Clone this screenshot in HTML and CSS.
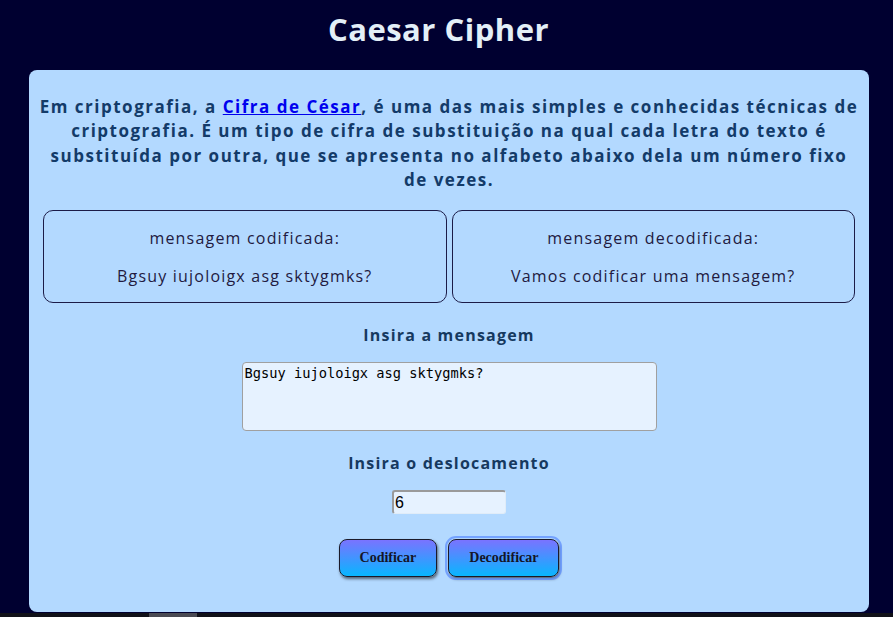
FILE: index.html
```html
<!DOCTYPE html>
<html lang="pt">
<head>
<meta charset="utf-8">
<title>Caesar Cipher</title>
<link rel="stylesheet" href="styles.css">
</head>
<body>
<h1 class="title">Caesar Cipher</h1>
<main class="card">
  <p class="intro">Em criptografia, a <a href="#" class="link">Cifra de César</a>, é uma das mais simples e conhecidas técnicas de criptografia. É um tipo de cifra de substituição na qual cada letra do texto é substituída por outra, que se apresenta no alfabeto abaixo dela um número fixo de vezes.</p>
  <div class="results">
    <div class="result">
      <p class="result-label">mensagem codificada:</p>
      <p class="result-text">Bgsuy iujoloigx asg sktygmks?</p>
    </div>
    <div class="result">
      <p class="result-label">mensagem decodificada:</p>
      <p class="result-text">Vamos codificar uma mensagem?</p>
    </div>
  </div>
  <label class="field-label" for="msg">Insira a mensagem</label>
  <textarea id="msg" class="message" spellcheck="false">Bgsuy iujoloigx asg sktygmks?</textarea>
  <label class="field-label second" for="shift">Insira o deslocamento</label>
  <input id="shift" class="shift" type="text" value="6">
  <div class="actions">
    <button class="btn">Codificar</button>
    <button class="btn focused">Decodificar</button>
  </div>
</main>
<div class="scrollbar"><div class="thumb"></div></div>
</body>
</html>
```

FILE: styles.css
```css
html, body {
  margin: 0;
  padding: 0;
  background: #000030;
  height: 617px;
  overflow: hidden;
}
body {
  font-family: "Open Sans", "Noto Sans", sans-serif;
}
.title {
  margin: 0;
  padding: 9px 16px 0 0;
  height: 40px;
  line-height: 40px;
  text-align: center;
  font-size: 31px;
  font-weight: 700;
  color: #e3eff7;
  letter-spacing: 0.5px;
}
.card {
  margin: 21px 24px 0 29px;
  height: 542px;
  box-sizing: border-box;
  background: #b3d9ff;
  border-radius: 8px;
  padding: 25px 14px 0 14px;
  display: flex;
  flex-direction: column;
  align-items: center;
}
.intro {
  margin: 0 -5px;
  text-align: center;
  font-size: 17px;
  line-height: 24.3px;
  font-weight: 700;
  letter-spacing: 1.5px;
  color: #133b69;
}
.link {
  color: #0000ee;
  text-decoration: underline;
}
.results {
  margin-top: 18px;
  align-self: stretch;
  display: flex;
  gap: 5px;
}
.result {
  flex: 1;
  border: 1px solid #1c1c48;
  border-radius: 10px;
  padding: 15px 10px 14px;
  display: flex;
  flex-direction: column;
  gap: 14px;
  text-align: center;
  color: #221a3f;
  font-size: 16px;
  line-height: 24px;
  letter-spacing: 1.2px;
}
.result p {
  margin: 0;
}
.field-label {
  margin-top: 20px;
  font-size: 16px;
  line-height: 24px;
  font-weight: 700;
  letter-spacing: 1.2px;
  color: #16395f;
}
.field-label.second {
  margin-top: 20px;
}
.message {
  margin-top: 15px;
  width: 415px;
  height: 69px;
  box-sizing: border-box;
  background: #e6f2ff;
  border: 1px solid #a0a0a0;
  border-radius: 4px;
  padding: 2px 2px;
  font-family: "DejaVu Sans Mono", monospace;
  font-size: 13.7px;
  line-height: 16px;
  color: #000;
  resize: none;
}
.shift {
  margin-top: 15px;
  width: 114px;
  height: 24px;
  box-sizing: border-box;
  background: #e6f2ff;
  border-style: solid;
  border-width: 2px 1px 1px 2px;
  border-color: #9a9a9a #e0ecf8 #e0ecf8 #9a9a9a;
  border-radius: 3px;
  padding: 0 1px;
  font-family: "Liberation Sans", Arial, sans-serif;
  font-size: 16px;
  color: #000;
}
.actions {
  margin-top: 25px;
  display: flex;
  gap: 11px;
}
.btn {
  height: 38px;
  padding: 0 20px;
  border: 1px solid #1a1a2a;
  border-radius: 8px;
  background: linear-gradient(to bottom, #7a73ff, #08b6ff);
  box-shadow: 1px 2px 3px rgba(0, 0, 0, 0.55);
  font-family: "Liberation Serif", "Times New Roman", serif;
  font-weight: 700;
  font-size: 14px;
  color: #141428;
}
.btn.focused {
  outline: 2px solid rgba(90, 140, 255, 0.7);
  outline-offset: 1px;
}
.scrollbar {
  margin-top: 1px;
  height: 5px;
  background: #111118;
}
.thumb {
  margin-left: 149px;
  width: 48px;
  height: 5px;
  background: #4a4a52;
}
```
